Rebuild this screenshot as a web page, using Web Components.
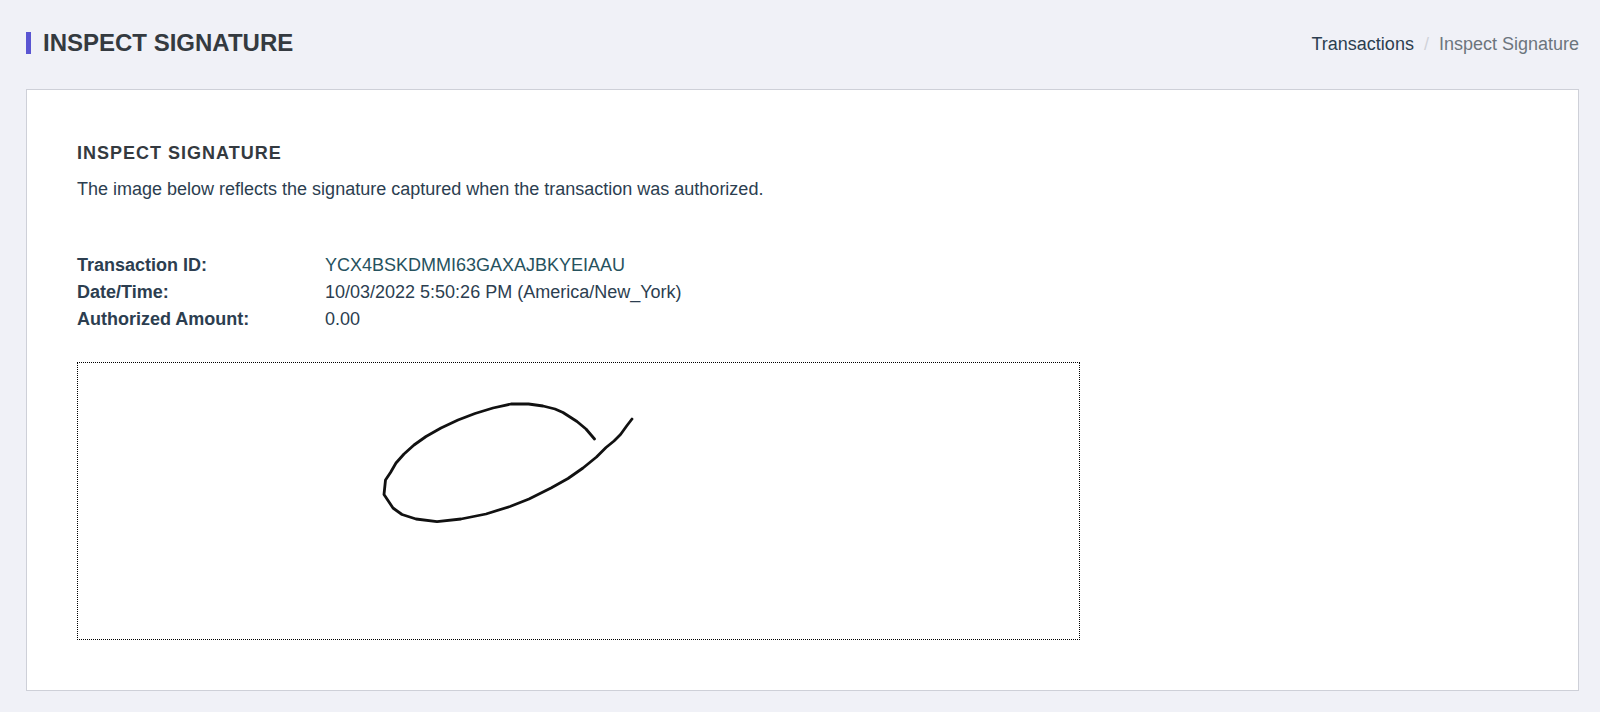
<!DOCTYPE html>
<html lang="en">
<head>
<meta charset="utf-8">
<title>Inspect Signature</title>
<style>
  body {
    margin: 0;
    background: #f0f1f7;
    color: #2c3e50;
    font: 18px/27px "Liberation Sans", Arial, sans-serif;
  }
</style>
</head>
<body>
<inspect-page>
  <page-header slot="header" heading="Inspect Signature">
    <a href="#transactions">Transactions</a>
    <span slot="current">Inspect Signature</span>
  </page-header>
  <content-card heading="Inspect Signature">
    <span slot="lead">The image below reflects the signature captured when the transaction was authorized.</span>
    <transaction-details></transaction-details>
    <signature-image></signature-image>
  </content-card>
</inspect-page>

<script>
  class BaseElement extends HTMLElement {
    connectedCallback() {
      if (this.shadowRoot) return;
      this.attachShadow({ mode: "open" }).innerHTML = this.render();
    }
  }

  customElements.define("inspect-page", class extends BaseElement {
    render() {
      return `
        <style>
          :host { display: block; padding: 24px 21px 21px 26px; }
          main { margin-top: 27px; }
        </style>
        <slot name="header"></slot>
        <main><slot></slot></main>`;
    }
  });

  customElements.define("page-header", class extends BaseElement {
    render() {
      return `
        <style>
          :host { display: block; }
          header { display: flex; justify-content: space-between; align-items: center; height: 38px; }
          h1 {
            display: flex; align-items: center; gap: 12px; margin: 0;
            color: #343a40; font-size: 24px; line-height: 38px; text-transform: uppercase;
          }
          h1::before { content: ""; width: 5px; height: 22px; background: #5a55d2; }
          ol { display: flex; gap: 10px; margin: 0; padding: 2px 0 0; list-style: none; font-size: 18px; }
          ::slotted(a) { color: #2c3e50; text-decoration: none; }
          .sep { color: #d0d3da; }
          .current { color: #6c757d; }
        </style>
        <header>
          <h1>${this.getAttribute("heading")}</h1>
          <nav aria-label="Breadcrumb">
            <ol>
              <li><slot></slot></li>
              <li class="sep" aria-hidden="true">/</li>
              <li class="current" aria-current="page"><slot name="current"></slot></li>
            </ol>
          </nav>
        </header>`;
    }
  });

  customElements.define("content-card", class extends BaseElement {
    render() {
      return `
        <style>
          :host { display: block; padding: 50px; border: 1px solid #ced0d8; background: #fff; }
          h2 {
            margin: 0; color: #343a40; font-size: 18px; line-height: 26px;
            letter-spacing: 1px; text-transform: uppercase;
          }
          p { margin: 10px 0 49px; }
        </style>
        <h2>${this.getAttribute("heading")}</h2>
        <p><slot name="lead"></slot></p>
        <slot></slot>`;
    }
  });

  customElements.define("transaction-details", class extends BaseElement {
    render() {
      return `
        <style>
          :host { display: block; }
          dl { display: grid; grid-template-columns: 248px 1fr; margin: 0 0 29px; }
          dt { font-weight: bold; }
          dd { margin: 0; }
          a { color: #26525e; text-decoration: none; }
        </style>
        <dl>
          <dt>Transaction ID:</dt><dd><a href="#transaction">YCX4BSKDMMI63GAXAJBKYEIAAU</a></dd>
          <dt>Date/Time:</dt><dd>10/03/2022 5:50:26 PM (America/New_York)</dd>
          <dt>Authorized Amount:</dt><dd>0.00</dd>
        </dl>`;
    }
  });

  customElements.define("signature-image", class extends BaseElement {
    render() {
      return `
        <style>
          :host { display: block; }
          svg { display: block; box-sizing: border-box; width: 100%; max-width: 1003px; border: 1px dotted #000; }
        </style>
        <svg viewBox="0 0 1001 276" role="img" aria-label="Captured signature">
          <path fill="none" stroke="#111" stroke-width="2.8" stroke-linecap="round" stroke-linejoin="round"
            d="M516.5 76 L508 66 L499 58.5 L485 49.5 L477 46 L465 43 L450.5 41 H433 L415 45 L397 50.5 L380 57 L363 65 L348 73.500 L336 82 L326 91 L318 100 L312.500 109.500 L307.500 117 L306 131.500 L315 145 L324 151.500 L338 156 L359 158.700 L383 156 L408 151 L432 143.500 L451 136 L473 125 L490 115.500 L505 105 L518.500 94 L528 84.500 L536 78 L542.500 71.500 L549 62.500 L554 56"/>
        </svg>`;
    }
  });
</script>
</body>
</html>
